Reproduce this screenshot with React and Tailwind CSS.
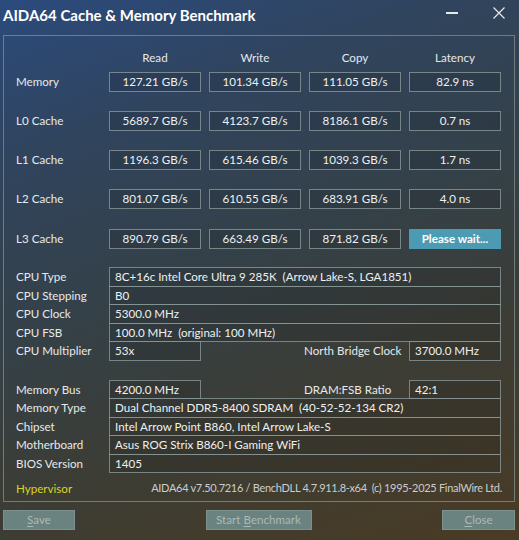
import React from 'react';

const font = { fontFamily: 'Lato, "Noto Sans", sans-serif' };

const benchRows = [
  { label: 'Memory', vals: ['127.21 GB/s', '101.34 GB/s', '111.05 GB/s', '82.9 ns'] },
  { label: 'L0 Cache', vals: ['5689.7 GB/s', '4123.7 GB/s', '8186.1 GB/s', '0.7 ns'] },
  { label: 'L1 Cache', vals: ['1196.3 GB/s', '615.46 GB/s', '1039.3 GB/s', '1.7 ns'] },
  { label: 'L2 Cache', vals: ['801.07 GB/s', '610.55 GB/s', '683.91 GB/s', '4.0 ns'] },
  { label: 'L3 Cache', vals: ['890.79 GB/s', '663.49 GB/s', '871.82 GB/s', null] },
];

const box = 'border border-[#8b9999]/80 bg-black/10';

function Cell({ children, wait }) {
  if (wait) {
    return (
      <div className="w-[92px] h-[20px] bg-[#4d9bb2] flex items-center justify-center font-bold text-white">
        Please wait...
      </div>
    );
  }
  return (
    <div className={`w-[92px] h-[20px] ${box} flex items-center justify-center text-[#eef1f1]`}>
      {children}
    </div>
  );
}

function InfoRow({ label, children }) {
  return (
    <div className="flex items-center h-[19.5px] -mt-px first:mt-0">
      <div className="w-[93px] shrink-0 text-[#e6eaea]">{label}</div>
      {children}
    </div>
  );
}

function Wide({ children }) {
  return (
    <div className={`w-[392px] h-full ${box} flex items-center px-[5px] text-[#eef1f1] whitespace-nowrap`}>{children}</div>
  );
}

function Small({ children }) {
  return (
    <div className={`w-[92px] shrink-0 h-full ${box} flex items-center px-[5px] text-[#eef1f1]`}>{children}</div>
  );
}

function Btn({ w, children }) {
  return (
    <div
      className={`${w} h-[20px] bg-[#6a8380] border border-[#7a918e] flex items-center justify-center text-[#aab9b6]`}
    >
      {children}
    </div>
  );
}

export default function App() {
  return (
    <div
      style={font}
      className="w-[519px] h-[540px] overflow-hidden flex flex-col text-[11.6px] bg-[linear-gradient(160deg,#2b4b7d_0%,#30445e_22%,#34414a_45%,#3b3d36_68%,#4a3b24_100%)]"
    >
      {/* title bar */}
      <div className="h-[35px] flex items-center pl-[3px] pr-[14px] shrink-0">
        <div className="text-white font-bold text-[15px] -mt-[4px] whitespace-nowrap">
          AIDA64 Cache &amp; Memory Benchmark
        </div>
        <div className="flex-1" />
        <div className="w-[12px] h-[1.5px] bg-[#e8e8e8] mr-[35px] -mt-[9px]" />
        <svg width="12" height="12" viewBox="0 0 12 12" className="-mt-[9px]">
          <path d="M0.5 0.5L11.5 11.5M11.5 0.5L0.5 11.5" stroke="#e8e8e8" strokeWidth="1.2" />
        </svg>
      </div>

      {/* main panel */}
      <div className="mx-[3px] w-[512px] h-[467px] border border-[#7e8b8b]/80 pl-[12px] flex flex-col shrink-0">
        {/* headers */}
        <div className="flex h-[35px] items-center pt-[8px]">
          <div className="w-[93px]" />
          {['Read', 'Write', 'Copy', 'Latency'].map((h) => (
            <div key={h} className="w-[92px] mr-[8px] text-center text-[#e6eaea]">{h}</div>
          ))}
        </div>

        {benchRows.map((r, i) => (
          <div key={r.label} className={`flex items-center h-[20px] ${i === 0 ? 'mt-px' : i === 4 ? 'mt-[20px]' : 'mt-[19px]'}`}>
            <div className="w-[93px] text-[#e6eaea]">{r.label}</div>
            <div className="flex gap-[8px]">
              {r.vals.map((v, j) => (
                <Cell key={j} wait={v === null}>{v}</Cell>
              ))}
            </div>
          </div>
        ))}

        {/* CPU info */}
        <div className="mt-[18px] flex flex-col">
          <InfoRow label="CPU Type"><Wide>8C+16c Intel Core Ultra 9 285K&nbsp; (Arrow Lake-S, LGA1851)</Wide></InfoRow>
          <InfoRow label="CPU Stepping"><Wide>B0</Wide></InfoRow>
          <InfoRow label="CPU Clock"><Wide>5300.0 MHz</Wide></InfoRow>
          <InfoRow label="CPU FSB"><Wide>100.0 MHz&nbsp; (original: 100 MHz)</Wide></InfoRow>
          <InfoRow label="CPU Multiplier">
            <Small>53x</Small>
            <div className="w-[105px] shrink-0 ml-[103px] text-[#e6eaea] whitespace-nowrap">North Bridge Clock</div>
            <Small>3700.0 MHz</Small>
          </InfoRow>
        </div>

        {/* memory info */}
        <div className="mt-[19px] flex flex-col">
          <InfoRow label="Memory Bus">
            <Small>4200.0 MHz</Small>
            <div className="w-[105px] shrink-0 ml-[103px] text-[#e6eaea] whitespace-nowrap">DRAM:FSB Ratio</div>
            <Small>42:1</Small>
          </InfoRow>
          <InfoRow label="Memory Type"><Wide>Dual Channel DDR5-8400 SDRAM&nbsp; (40-52-52-134 CR2)</Wide></InfoRow>
          <InfoRow label="Chipset"><Wide>Intel Arrow Point B860, Intel Arrow Lake-S</Wide></InfoRow>
          <InfoRow label="Motherboard"><Wide>Asus ROG Strix B860-I Gaming WiFi</Wide></InfoRow>
          <InfoRow label="BIOS Version"><Wide>1405</Wide></InfoRow>
        </div>

        <div className="flex items-center mt-[7px] pr-[12px]">
          <div className="text-[#d9d522]">Hypervisor</div>
          <div className="flex-1" />
          <div className="text-[#c9cdcd] whitespace-nowrap text-[11px] tracking-[-0.3px]">
            AIDA64 v7.50.7216 / BenchDLL 4.7.911.8-x64&nbsp; (c) 1995-2025 FinalWire Ltd.
          </div>
        </div>
      </div>

      {/* buttons */}
      <div className="flex items-center mt-[8px] pl-[3px] pr-[4px]">
        <Btn w="w-[72px]"><span className="underline underline-offset-2">S</span>ave</Btn>
        <div className="flex-1 flex justify-center">
          <Btn w="w-[106px]">Start <span className="underline underline-offset-2 ml-[3px]">B</span>enchmark</Btn>
        </div>
        <Btn w="w-[73px]"><span className="underline underline-offset-2">C</span>lose</Btn>
      </div>
    </div>
  );
}
